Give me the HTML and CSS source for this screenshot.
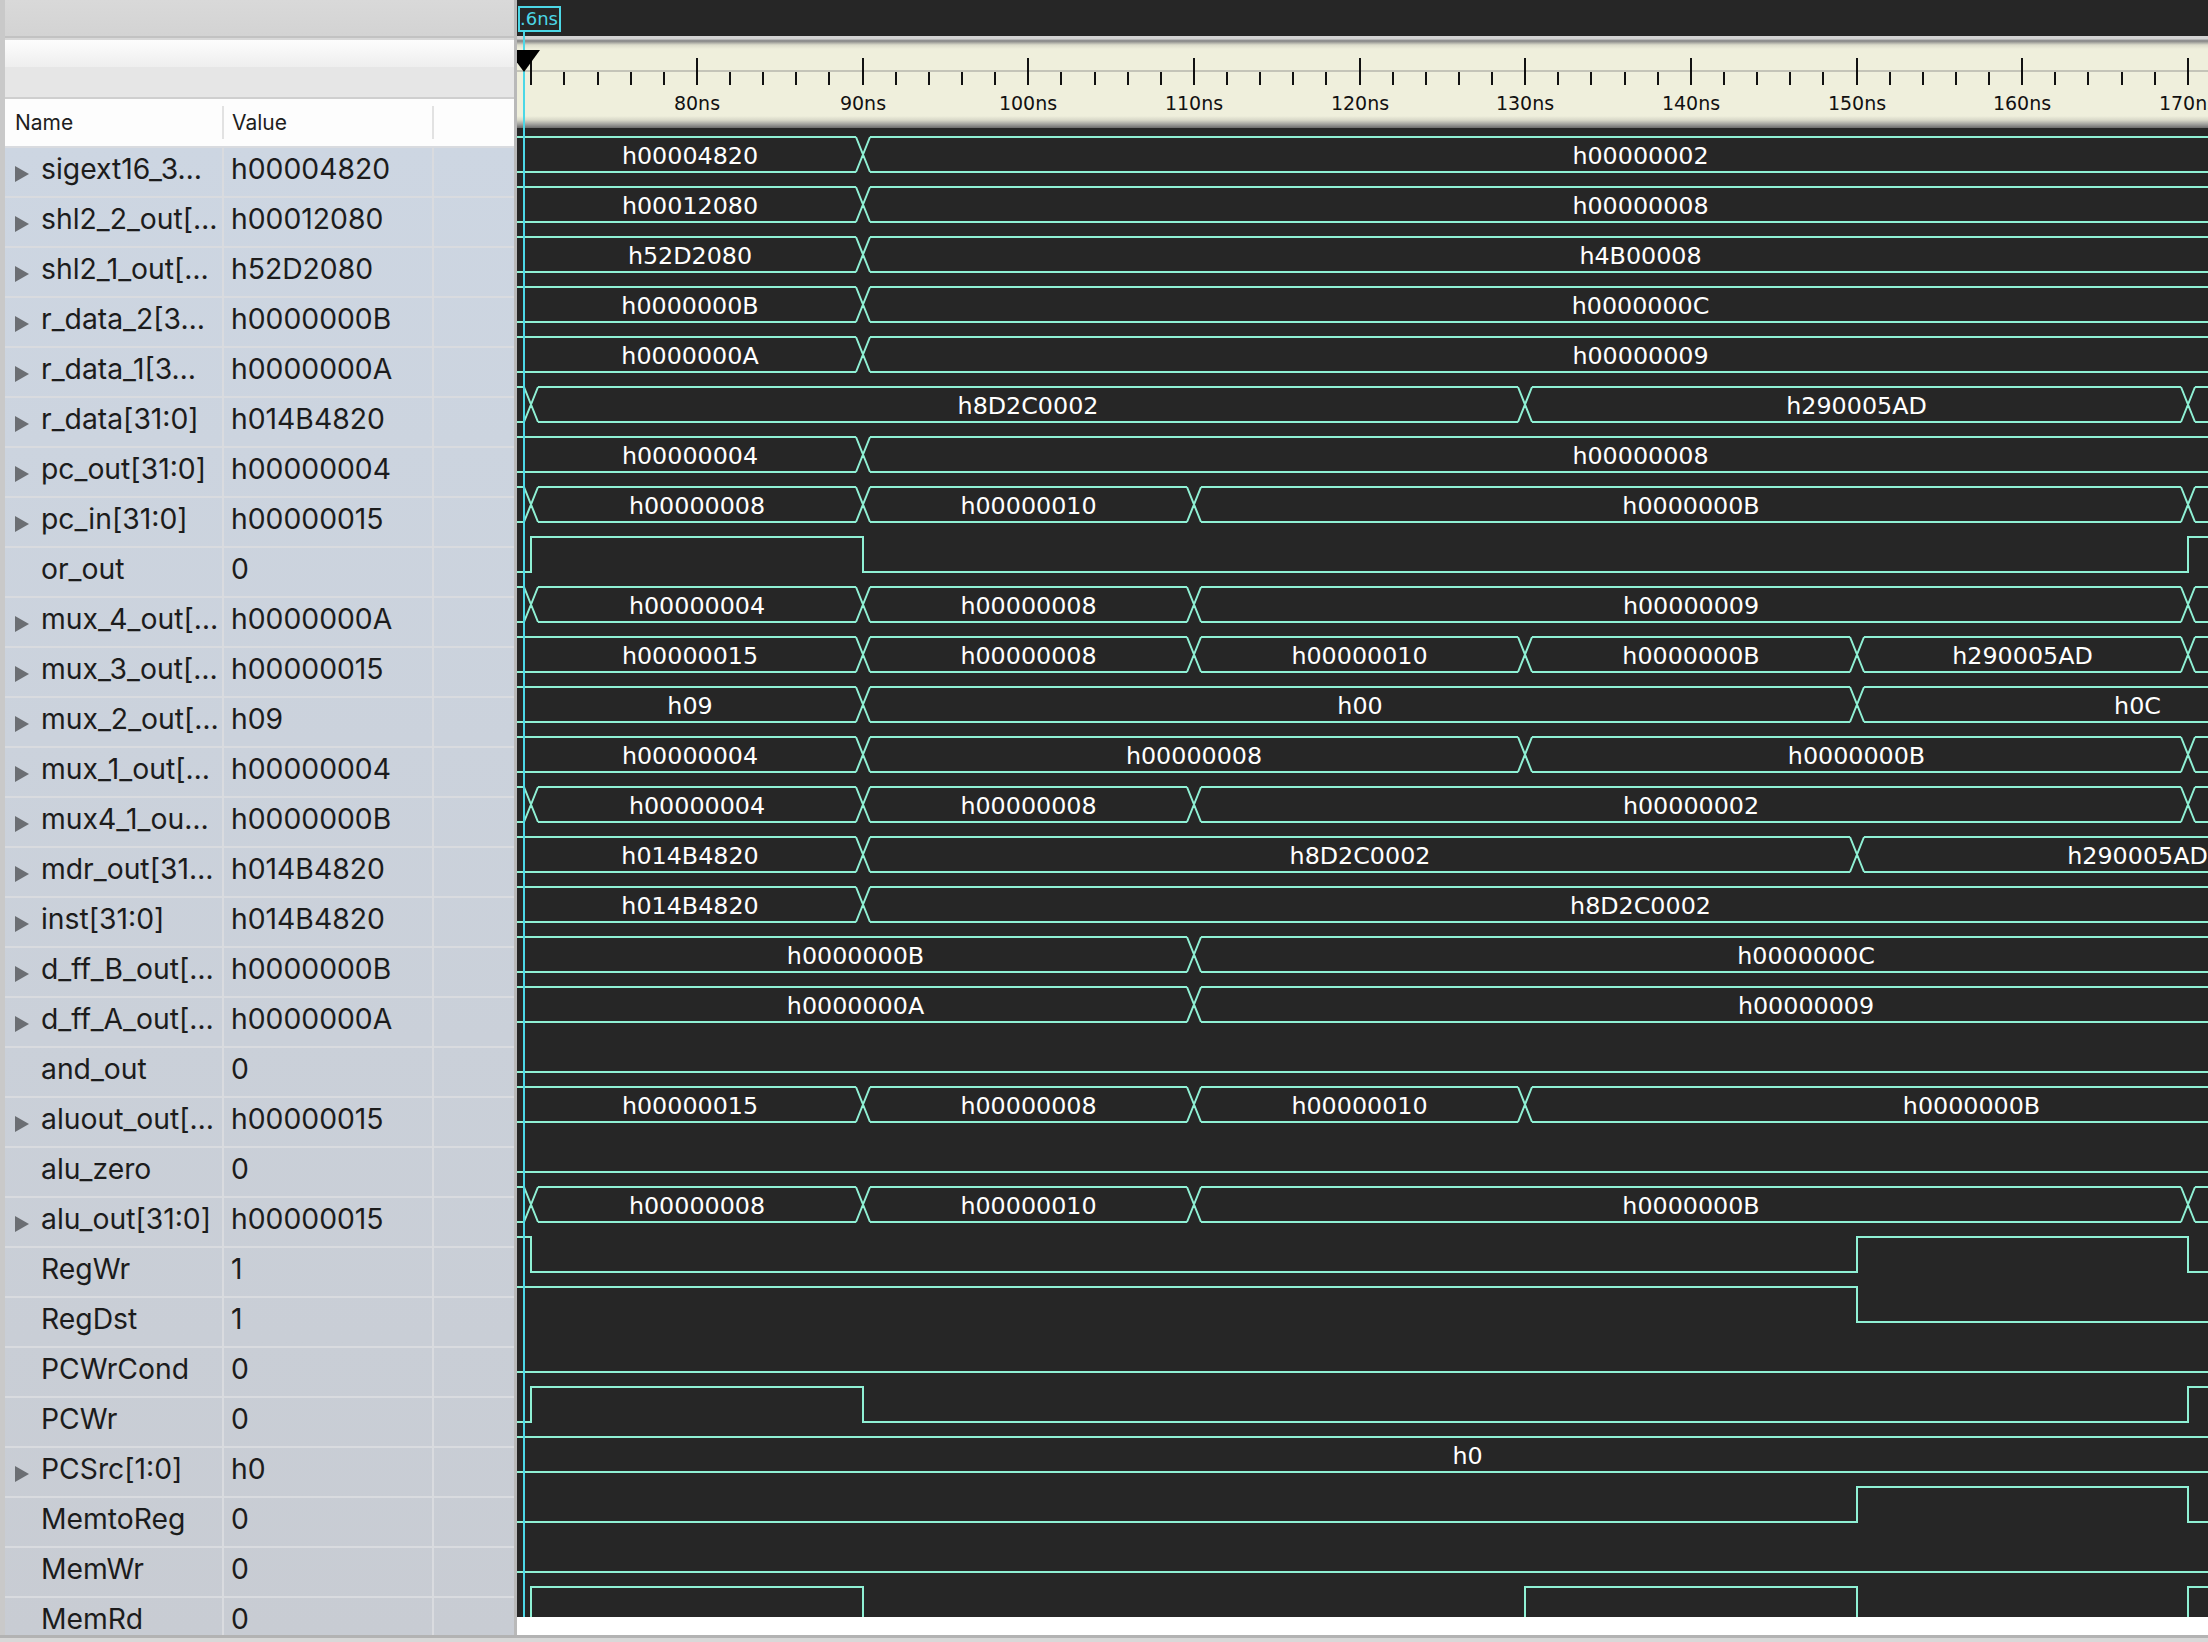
FILE: index.html
```html
<!DOCTYPE html>
<html>
<head>
<meta charset="utf-8">
<title>Waveform</title>
<link rel="stylesheet" href="styles.css">
</head>
<body>
<div class="window">
  <div class="main">
    <aside class="sidebar">
      <div class="toolbar"></div>
      <div class="search"></div>
      <div class="table-head">
        <div class="col col-name">Name</div>
        <div class="col col-value">Value</div>
        <div class="col col-extra"></div>
      </div>
      <div class="rows">
        <div class="row"><div class="cell name"><span class="twisty"></span>sigext16_3…</div><div class="cell value">h00004820</div><div class="cell extra"></div></div>
        <div class="row"><div class="cell name"><span class="twisty"></span>shl2_2_out[…</div><div class="cell value">h00012080</div><div class="cell extra"></div></div>
        <div class="row"><div class="cell name"><span class="twisty"></span>shl2_1_out[…</div><div class="cell value">h52D2080</div><div class="cell extra"></div></div>
        <div class="row"><div class="cell name"><span class="twisty"></span>r_data_2[3…</div><div class="cell value">h0000000B</div><div class="cell extra"></div></div>
        <div class="row"><div class="cell name"><span class="twisty"></span>r_data_1[3…</div><div class="cell value">h0000000A</div><div class="cell extra"></div></div>
        <div class="row"><div class="cell name"><span class="twisty"></span>r_data[31:0]</div><div class="cell value">h014B4820</div><div class="cell extra"></div></div>
        <div class="row"><div class="cell name"><span class="twisty"></span>pc_out[31:0]</div><div class="cell value">h00000004</div><div class="cell extra"></div></div>
        <div class="row"><div class="cell name"><span class="twisty"></span>pc_in[31:0]</div><div class="cell value">h00000015</div><div class="cell extra"></div></div>
        <div class="row"><div class="cell name"><span class="twisty none"></span>or_out</div><div class="cell value">0</div><div class="cell extra"></div></div>
        <div class="row"><div class="cell name"><span class="twisty"></span>mux_4_out[…</div><div class="cell value">h0000000A</div><div class="cell extra"></div></div>
        <div class="row"><div class="cell name"><span class="twisty"></span>mux_3_out[…</div><div class="cell value">h00000015</div><div class="cell extra"></div></div>
        <div class="row"><div class="cell name"><span class="twisty"></span>mux_2_out[…</div><div class="cell value">h09</div><div class="cell extra"></div></div>
        <div class="row"><div class="cell name"><span class="twisty"></span>mux_1_out[…</div><div class="cell value">h00000004</div><div class="cell extra"></div></div>
        <div class="row"><div class="cell name"><span class="twisty"></span>mux4_1_ou…</div><div class="cell value">h0000000B</div><div class="cell extra"></div></div>
        <div class="row"><div class="cell name"><span class="twisty"></span>mdr_out[31…</div><div class="cell value">h014B4820</div><div class="cell extra"></div></div>
        <div class="row"><div class="cell name"><span class="twisty"></span>inst[31:0]</div><div class="cell value">h014B4820</div><div class="cell extra"></div></div>
        <div class="row"><div class="cell name"><span class="twisty"></span>d_ff_B_out[…</div><div class="cell value">h0000000B</div><div class="cell extra"></div></div>
        <div class="row"><div class="cell name"><span class="twisty"></span>d_ff_A_out[…</div><div class="cell value">h0000000A</div><div class="cell extra"></div></div>
        <div class="row"><div class="cell name"><span class="twisty none"></span>and_out</div><div class="cell value">0</div><div class="cell extra"></div></div>
        <div class="row"><div class="cell name"><span class="twisty"></span>aluout_out[…</div><div class="cell value">h00000015</div><div class="cell extra"></div></div>
        <div class="row"><div class="cell name"><span class="twisty none"></span>alu_zero</div><div class="cell value">0</div><div class="cell extra"></div></div>
        <div class="row"><div class="cell name"><span class="twisty"></span>alu_out[31:0]</div><div class="cell value">h00000015</div><div class="cell extra"></div></div>
        <div class="row"><div class="cell name"><span class="twisty none"></span>RegWr</div><div class="cell value">1</div><div class="cell extra"></div></div>
        <div class="row"><div class="cell name"><span class="twisty none"></span>RegDst</div><div class="cell value">1</div><div class="cell extra"></div></div>
        <div class="row"><div class="cell name"><span class="twisty none"></span>PCWrCond</div><div class="cell value">0</div><div class="cell extra"></div></div>
        <div class="row"><div class="cell name"><span class="twisty none"></span>PCWr</div><div class="cell value">0</div><div class="cell extra"></div></div>
        <div class="row"><div class="cell name"><span class="twisty"></span>PCSrc[1:0]</div><div class="cell value">h0</div><div class="cell extra"></div></div>
        <div class="row"><div class="cell name"><span class="twisty none"></span>MemtoReg</div><div class="cell value">0</div><div class="cell extra"></div></div>
        <div class="row"><div class="cell name"><span class="twisty none"></span>MemWr</div><div class="cell value">0</div><div class="cell extra"></div></div>
        <div class="row"><div class="cell name"><span class="twisty none"></span>MemRd</div><div class="cell value">0</div><div class="cell extra"></div></div>
      </div>
    </aside>
    <section class="viewer">
      <div class="topbar"><div class="marker-label">.6ns</div></div>
      <div class="ruler">
        <svg id="ruler" class="ruler-svg" width="1700" height="92" xmlns="http://www.w3.org/2000/svg"></svg>
        <div class="marker-head"></div>
      </div>
      <div class="waves">
        <svg id="waves" class="waves-svg" width="1901" height="1489" xmlns="http://www.w3.org/2000/svg"></svg>
      </div>
      <div class="hscroll"></div>
      <div class="cursor"></div>
    </section>
  </div>
  <div class="statusbar"></div>
</div>
<script src="script.js"></script>
</body>
</html>
```

FILE: styles.css
```css
html, body {
  margin: 0;
  padding: 0;
  width: 2208px;
  height: 1642px;
  overflow: hidden;
  background: #d6d6d6;
}

.window {
  display: flex;
  flex-direction: column;
  width: 2208px;
  height: 1642px;
}

.main {
  display: flex;
  height: 1635px;
  flex: none;
}

/* ---------- left signal list ---------- */
.sidebar {
  width: 517px;
  flex: none;
  box-sizing: border-box;
  border-left: 5px solid #c9c9c9;
  border-right: 3px solid #b9b9b9;
  display: flex;
  flex-direction: column;
  background: #d6d6d6;
  font-family: "Inter", "Liberation Sans", sans-serif;
  color: #1c1c1c;
}

.toolbar {
  height: 36px;
  flex: none;
  background: linear-gradient(#d9d9d9, #d3d3d3);
}

.search {
  height: 61px;
  flex: none;
  background: linear-gradient(to bottom,
    #c2c2c2 0, #c2c2c2 2px,
    #d8d8d8 2px, #d8d8d8 4px,
    #fdfdfd 4px, #eeeeee 31px,
    #e6e6e6 31px, #e6e6e6 61px);
}

.table-head {
  height: 49px;
  flex: none;
  box-sizing: border-box;
  border-top: 2px solid #cfcfcf;
  background: #fdfdfd;
  display: flex;
  padding: 7px 0;
  font-size: 21px;
  color: #1e1e1e;
}

.col {
  box-sizing: border-box;
  height: 33px;
  line-height: 33px;
  border-right: 2px solid #e2e2e2;
}

.col-name { width: 219px; padding-left: 10px; }
.col-value { width: 210px; padding-left: 8px; }
.col-extra { flex: 1; border-right: none; }

.rows {
  flex: 1;
  overflow: hidden;
  background: linear-gradient(#cdd6e2, #c8ccd3);
}

.row {
  display: flex;
  height: 50px;
  box-sizing: border-box;
  border-top: 2px solid #d9dbdf;
  font-size: 28.3px;
  line-height: 40px;
}

.cell {
  box-sizing: border-box;
  white-space: nowrap;
  overflow: hidden;
  padding-bottom: 6px;
}

.cell.name {
  width: 219px;
  border-right: 2px solid #d9dbdf;
  display: flex;
  align-items: center;
  padding-left: 10px;
}

.cell.value {
  width: 210px;
  border-right: 2px solid #d9dbdf;
  padding-left: 7px;
  display: flex;
  align-items: center;
}

.cell.extra { flex: 1; }

.twisty {
  flex: none;
  width: 0;
  height: 0;
  border-left: 14px solid #6b6e73;
  border-top: 8.5px solid transparent;
  border-bottom: 8.5px solid transparent;
  margin-right: 12px;
  margin-top: 9px;
}

.twisty.none { visibility: hidden; }

/* ---------- waveform viewer ---------- */
.viewer {
  flex: 1;
  position: relative;
  overflow: hidden;
  display: flex;
  flex-direction: column;
  background: #262626;
}

.topbar {
  height: 36px;
  flex: none;
  background: #262626;
  position: relative;
}

.marker-label {
  position: absolute;
  left: 1px;
  top: 6px;
  width: 43px;
  height: 26px;
  box-sizing: border-box;
  border: 2px solid #4cd7e6;
  color: #4cd7e6;
  font-family: "DejaVu Sans", sans-serif;
  font-size: 18px;
  line-height: 22px;
  padding-left: 0;
  white-space: nowrap;
  background: #262626;
}

.ruler {
  height: 92px;
  flex: none;
  position: relative;
  overflow: hidden;
  background: linear-gradient(to bottom,
    #d3d3d3 0, #d3d3d3 3px,
    #9a9a9a 4px, #858585 5px,
    #dcdccb 9px, #efefdc 13px,
    #efefdc 80px, #d8d8c8 84px,
    #a4a4a0 88px, #6c6c6c 92px);
}

.ruler-svg {
  display: block;
}

.marker-head {
  position: absolute;
  left: -9px;
  top: 14px;
  width: 0;
  height: 0;
  border-left: 16px solid transparent;
  border-right: 16px solid transparent;
  border-top: 22px solid #000;
  z-index: 3;
}

.waves {
  flex: 1;
  overflow: hidden;
  background: #262626;
}

.waves-svg {
  display: block;
}

.hscroll {
  height: 18px;
  flex: none;
  background: #ffffff;
}

.cursor {
  position: absolute;
  left: 6px;
  top: 32px;
  bottom: 18px;
  width: 2px;
  background: #4cd7e6;
  z-index: 2;
}

.statusbar {
  height: 7px;
  flex: none;
  box-sizing: border-box;
  border-top: 3px solid #b3b3b3;
  background: #d8d8d8;
}
```

FILE: script.js
```js
(function () {
  var NS = 'http://www.w3.org/2000/svg';
  var PX = 16.565;          // pixels per ns
  var X70 = 531.3 - 517;    // x of 70ns inside viewer
  var W = 1901;
  var TOP = 9, BOT = 44, H = 7, PITCH = 50;
  var LINE = '#8ff0d4';

  function tx(t) { return X70 + (t - 70) * PX; }

  function el(name, attrs, text) {
    var e = document.createElementNS(NS, name);
    for (var k in attrs) e.setAttribute(k, attrs[k]);
    if (text != null) e.textContent = text;
    return e;
  }

  /* ----- ruler ----- */
  var ruler = document.getElementById('ruler');
  ruler.appendChild(el('line', { x1: 0, y1: 35, x2: 1700, y2: 35, stroke: '#c4c4b8', 'stroke-width': 2 }));
  for (var k = 0; k <= 52; k++) {
    var x = Math.round(X70 + k * PX * 2);
    var major = k % 5 === 0;
    ruler.appendChild(el('line', { x1: x, y1: major ? 22 : 36, x2: x, y2: 49, stroke: '#111', 'stroke-width': 2 }));
    if (major && k > 0) {
      ruler.appendChild(el('text', {
        x: x, y: 74, 'text-anchor': 'middle', fill: '#111',
        'font-family': 'DejaVu Sans, sans-serif', 'font-size': 19
      }, (70 + k * 2) + 'ns'));
    }
  }

  /* ----- signals ----- */
  var S = [
    { bus: [[null, 'h00004820'], [90, 'h00000002']] },
    { bus: [[null, 'h00012080'], [90, 'h00000008']] },
    { bus: [[null, 'h52D2080'], [90, 'h4B00008']] },
    { bus: [[null, 'h0000000B'], [90, 'h0000000C']] },
    { bus: [[null, 'h0000000A'], [90, 'h00000009']] },
    { bus: [[null, ''], [70, 'h8D2C0002'], [130, 'h290005AD'], [170, '']] },
    { bus: [[null, 'h00000004'], [90, 'h00000008']] },
    { bus: [[null, ''], [70, 'h00000008'], [90, 'h00000010'], [110, 'h0000000B'], [170, '']] },
    { bit: 0, edges: [[70, 1], [90, 0], [170, 1]] },
    { bus: [[null, ''], [70, 'h00000004'], [90, 'h00000008'], [110, 'h00000009'], [170, '']] },
    { bus: [[null, 'h00000015'], [90, 'h00000008'], [110, 'h00000010'], [130, 'h0000000B'], [150, 'h290005AD'], [170, '']] },
    { bus: [[null, 'h09'], [90, 'h00'], [150, 'h0C']] },
    { bus: [[null, 'h00000004'], [90, 'h00000008'], [130, 'h0000000B'], [170, '']] },
    { bus: [[null, ''], [70, 'h00000004'], [90, 'h00000008'], [110, 'h00000002'], [170, '']] },
    { bus: [[null, 'h014B4820'], [90, 'h8D2C0002'], [150, 'h290005AD']] },
    { bus: [[null, 'h014B4820'], [90, 'h8D2C0002']] },
    { bus: [[null, 'h0000000B'], [110, 'h0000000C']] },
    { bus: [[null, 'h0000000A'], [110, 'h00000009']] },
    { bit: 0, edges: [] },
    { bus: [[null, 'h00000015'], [90, 'h00000008'], [110, 'h00000010'], [130, 'h0000000B']] },
    { bit: 0, edges: [] },
    { bus: [[null, ''], [70, 'h00000008'], [90, 'h00000010'], [110, 'h0000000B'], [170, '']] },
    { bit: 1, edges: [[70, 0], [150, 1], [170, 0]] },
    { bit: 1, edges: [[150, 0]] },
    { bit: 0, edges: [] },
    { bit: 0, edges: [[70, 1], [90, 0], [170, 1]] },
    { bus: [[null, 'h0']] },
    { bit: 0, edges: [[150, 1], [170, 0]] },
    { bit: 0, edges: [] },
    { bit: 0, edges: [[70, 1], [90, 0], [130, 1], [150, 0], [170, 1]] }
  ];

  var svg = document.getElementById('waves');
  var d = '';
  S.forEach(function (s, i) {
    var top = TOP + i * PITCH, bot = BOT + i * PITCH;
    if (s.bus) {
      var segs = s.bus;
      for (var j = 0; j < segs.length; j++) {
        var a = segs[j][0] === null ? null : Math.round(tx(segs[j][0]));
        var b = j + 1 < segs.length ? Math.round(tx(segs[j + 1][0])) : null;
        var lx = a === null ? -10 : a + H;
        var rx = b === null ? W + 10 : b - H;
        d += 'M' + lx + ' ' + top + 'H' + rx + 'M' + lx + ' ' + bot + 'H' + rx;
        if (a !== null) {
          d += 'M' + (a - H) + ' ' + top + 'L' + (a + H) + ' ' + bot;
          d += 'M' + (a - H) + ' ' + bot + 'L' + (a + H) + ' ' + top;
        }
        var label = segs[j][1];
        if (label) {
          var l = a === null ? 0 : Math.max(0, a);
          var r = b === null ? W : Math.min(W, b);
          svg.appendChild(el('text', {
            x: (l + r) / 2, y: 36 + i * PITCH, 'text-anchor': 'middle', fill: '#ffffff',
            'font-family': 'DejaVu Sans, sans-serif', 'font-size': 23.8
          }, label));
        }
      }
    } else {
      var lvl = s.bit;
      var y = lvl ? top : bot;
      d += 'M-10 ' + y;
      s.edges.forEach(function (e) {
        var x = Math.round(tx(e[0]));
        var ny = e[1] ? top : bot;
        d += 'H' + x + 'V' + ny;
        y = ny;
      });
      d += 'H' + (W + 10);
    }
  });
  var path = el('path', { d: d, fill: 'none', stroke: LINE, 'stroke-width': 2, 'stroke-linejoin': 'miter' });
  svg.insertBefore(path, svg.firstChild);
})();
```
